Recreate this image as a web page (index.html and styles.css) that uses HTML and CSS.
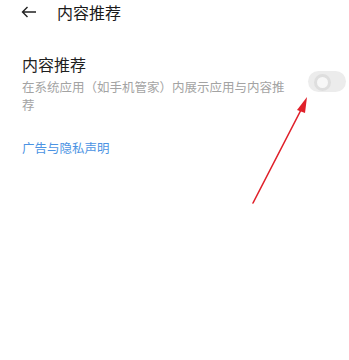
FILE: index.html
```html
<!DOCTYPE html>
<html lang="zh-CN">
<head>
<meta charset="utf-8">
<link rel="stylesheet" href="styles.css">
</head>
<body>
<div class="header">
  <svg class="back" width="16" height="12" viewBox="0 0 16 12"><path d="M15 6H1.5M6.5 1L1.5 6l5 5" fill="none" stroke="#222" stroke-width="1.4"/></svg>
  <span class="header-title">内容推荐</span>
</div>
<div class="row">
  <div class="row-text">
    <div class="row-title">内容推荐</div>
    <div class="row-desc">在系统应用（如手机管家）内展示应用与内容推荐</div>
  </div>
  <div class="toggle"><span class="knob"></span></div>
</div>
<div class="link">广告与隐私声明</div>
<svg class="annot" width="349" height="360" viewBox="0 0 349 360">
  <line x1="253" y1="203" x2="302" y2="108" stroke="#e0202a" stroke-width="1.6" stroke-linecap="round"/>
  <polygon points="307,97 297,110 305,113" fill="#e0202a"/>
</svg>
</body>
</html>
```
FILE: styles.css
```css
html, body {
  margin: 0;
  padding: 0;
  background: #ffffff;
  font-family: "Noto Sans CJK SC", "Noto Sans", sans-serif;
}
body {
  position: relative;
  width: 349px;
  height: 360px;
  overflow: hidden;
}
.header {
  display: flex;
  align-items: center;
  height: 20px;
  padding-top: 2px;
  padding-left: 21px;
}
.back {
  display: block;
  flex: none;
}
.header-title {
  margin-left: 20px;
  font-size: 16px;
  line-height: 20px;
  color: #1a1a1a;
}
.row {
  display: flex;
  align-items: flex-start;
  margin-top: 31px;
  padding-left: 22px;
  padding-right: 3px;
}
.row-text {
  width: 268px;
  margin-right: 18px;
}
.row-title {
  font-size: 16px;
  line-height: 22px;
  color: #1f1f1f;
}
.row-desc {
  margin-top: 3px;
  font-size: 12.5px;
  line-height: 18px;
  color: #a3a3a3;
}
.toggle {
  position: relative;
  margin-top: 18px;
  width: 38px;
  height: 21px;
  border-radius: 11px;
  background: #ececec;
}
.knob {
  position: absolute;
  left: 6px;
  top: 3px;
  width: 11px;
  height: 11px;
  border-radius: 50%;
  border: 3px solid #dedede;
  background: #f7f7f7;
}
.link {
  margin-top: 25px;
  padding-left: 22px;
  font-size: 12.5px;
  line-height: 18px;
  color: #4b93e3;
}
.annot {
  position: absolute;
  left: 0;
  top: 0;
  pointer-events: none;
}
```
